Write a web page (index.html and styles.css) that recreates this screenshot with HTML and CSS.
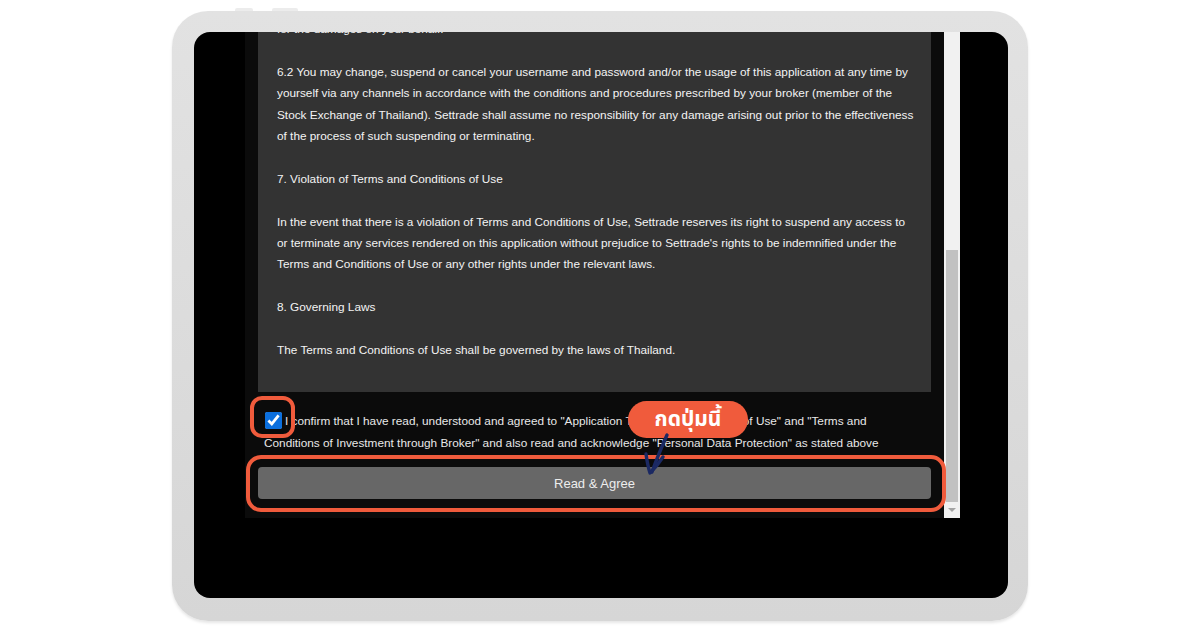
FILE: index.html
```html
<!DOCTYPE html>
<html lang="en">
<head>
<meta charset="utf-8">
<title>Terms and Conditions</title>
<link rel="stylesheet" href="styles.css">
</head>
<body>
<div class="page">
  <div class="tablet">
    <span class="hw-btn hw-btn-a"></span>
    <span class="hw-btn hw-btn-b"></span>
    <div class="screen">
      <div class="app">
        <div class="panel">
          <div class="terms">
            <p>for the damages on your behalf.</p>
            <p>6.2 You may change, suspend or cancel your username and password and/or the usage of this application at any time by<br>yourself via any channels in accordance with the conditions and procedures prescribed by your broker (member of the<br>Stock Exchange of Thailand). Settrade shall assume no responsibility for any damage arising out prior to the effectiveness<br>of the process of such suspending or terminating.</p>
            <p>7. Violation of Terms and Conditions of Use</p>
            <p>In the event that there is a violation of Terms and Conditions of Use, Settrade reserves its right to suspend any access to<br>or terminate any services rendered on this application without prejudice to Settrade's rights to be indemnified under the<br>Terms and Conditions of Use or any other rights under the relevant laws.</p>
            <p>8. Governing Laws</p>
            <p>The Terms and Conditions of Use shall be governed by the laws of Thailand.</p>
          </div>
          <label class="confirm"><input type="checkbox" checked>I confirm that I have read, understood and agreed to "Application Terms and Conditions of Use" and "Terms and<br>Conditions of Investment through Broker" and also read and acknowledge "Personal Data Protection" as stated above</label>
          <button class="agree" type="button">Read &amp; Agree</button>
        </div>
        <div class="scrollbar">
          <div class="thumb"></div>
          <div class="scroll-down"><span class="tri"></span></div>
        </div>
      </div>
      <div class="ring ring-check"></div>
      <div class="ring ring-button"></div>
      <div class="callout">กดปุ่มนี้</div>
      <svg class="arrow-mark" viewBox="0 0 36 50" width="36" height="50">
        <path d="M27 5 C23 14 17 28 12 42" fill="none" stroke="#1b2963" stroke-width="3.4" stroke-linecap="round"/>
        <path d="M6 24 C7 31 8 37 10 43" fill="none" stroke="#1b2963" stroke-width="3.4" stroke-linecap="round"/>
        <path d="M23 27 C19 33 15 38 11 42" fill="none" stroke="#1b2963" stroke-width="3.4" stroke-linecap="round"/>
      </svg>
    </div>
  </div>
</div>
</body>
</html>
```

FILE: styles.css
```css
* { box-sizing: border-box; }

html, body { margin: 0; }

body {
  width: 1200px;
  height: 630px;
  overflow: hidden;
  background: #ffffff;
  font-family: "Liberation Sans", Arial, sans-serif;
}

.page {
  padding: 11px 0 0 172px;
}

.tablet {
  position: relative;
  width: 856px;
  height: 610px;
  padding: 21px 20px 23px 22px;
  background: linear-gradient(#e2e2e2, #d6d6d6);
  border-radius: 36px;
  box-shadow: 0 2px 3px rgba(0, 0, 0, 0.10);
}

.hw-btn {
  position: absolute;
  top: -3px;
  height: 3px;
  background: #ececec;
  border-radius: 2px 2px 0 0;
}
.hw-btn-a { left: 63px; width: 18px; }
.hw-btn-b { left: 100px; width: 26px; }

.screen {
  position: relative;
  height: 100%;
  background: #000;
  border-radius: 16px;
  overflow: hidden;
}

.app {
  display: flex;
  height: 486px;
  padding-left: 51px;
}

.panel {
  width: 699px;
  background: #0b0b0b;
  padding: 0 13px 19px;
  display: flex;
  flex-direction: column;
}

.terms {
  margin-top: -13px;
  background: #333333;
  padding: 0 19px 30.6px;
  color: #f4f4f4;
  font-size: 11.8px;
  line-height: 21.4px;
  white-space: nowrap;
}
.terms p { margin: 0 0 21.4px; }
.terms p:last-child { margin-bottom: 0; }

.confirm {
  margin-top: 18px;
  padding-left: 6px;
  color: #e8e8e8;
  font-size: 11.8px;
  line-height: 22px;
  white-space: nowrap;
}
.confirm input {
  width: 17px;
  height: 17px;
  margin: 0 3px 0 1px;
  vertical-align: -4px;
  accent-color: #0b6fde;
}

.agree {
  margin-top: 13px;
  width: 100%;
  height: 32px;
  border: 0;
  border-radius: 4px;
  background: #676767;
  color: #ededed;
  font-family: "Liberation Sans", Arial, sans-serif;
  font-size: 13px;
}

.scrollbar {
  width: 16px;
  background: #f1f1f1;
  padding: 0 2px;
  display: flex;
  flex-direction: column;
  justify-content: flex-end;
}
.thumb {
  height: 252px;
  background: #c1c1c1;
}
.scroll-down {
  height: 16px;
  display: flex;
  align-items: center;
  justify-content: center;
}
.tri {
  width: 0;
  height: 0;
  border-left: 4px solid transparent;
  border-right: 4px solid transparent;
  border-top: 4px solid #a3a3a3;
}

.ring {
  position: absolute;
  border: 4px solid #f05b3c;
}
.ring-check {
  left: 56px;
  top: 364px;
  width: 45px;
  height: 42px;
  border-radius: 12px;
}
.ring-button {
  left: 52px;
  top: 423px;
  width: 700px;
  height: 57px;
  border-radius: 15px;
}

.callout {
  position: absolute;
  left: 434px;
  top: 369px;
  width: 120px;
  height: 37px;
  border-radius: 19px;
  background: #f05b3c;
  color: #fff;
  font-family: "Noto Sans Thai", "Noto Sans", sans-serif;
  font-weight: 700;
  font-size: 21px;
  display: flex;
  align-items: center;
  justify-content: center;
}

.arrow-mark {
  position: absolute;
  left: 446px;
  top: 398px;
}
```
